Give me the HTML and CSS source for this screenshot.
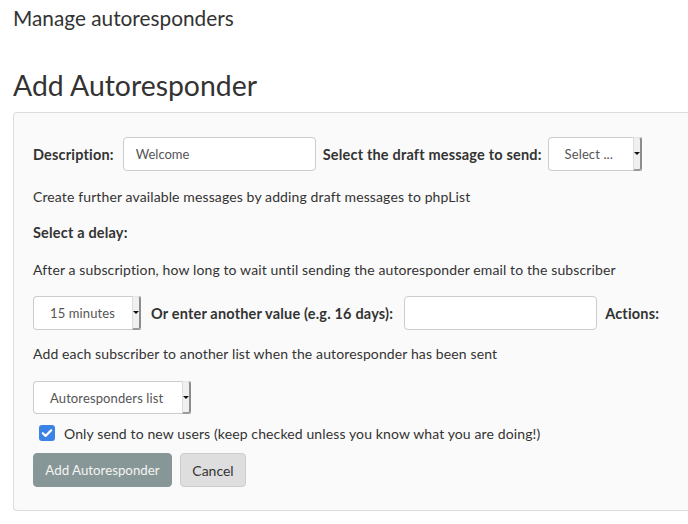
FILE: index.html
```html
<!DOCTYPE html>
<html>
<head>
<meta charset="utf-8">
<link rel="stylesheet" href="styles.css">
</head>
<body>
<div class="page">
  <h2 class="page-title">Manage autoresponders</h2>
  <h1 class="section-title">Add Autoresponder</h1>
  <form class="panel">
    <div class="row row-first">
      <label class="lbl">Description:</label>
      <input class="txt txt-desc" type="text" value="Welcome">
      <label class="lbl lbl-draft">Select the draft message to send:</label>
      <div class="sel sel-draft"><span class="sel-text">Select ...</span><span class="sel-btn"><span class="tri"></span></span></div>
    </div>
    <p class="line line-create">Create further available messages by adding draft messages to phpList</p>
    <p class="line line-bold">Select a delay:</p>
    <p class="line line-after">After a subscription, how long to wait until sending the autoresponder email to the subscriber</p>
    <div class="row row-delay">
      <div class="sel sel-delay"><span class="sel-text">15 minutes</span><span class="sel-btn"><span class="tri"></span></span></div>
      <label class="lbl lbl-other">Or enter another value (e.g. 16 days):</label>
      <input class="txt txt-other" type="text" value="">
      <label class="lbl">Actions:</label>
    </div>
    <p class="line line-add">Add each subscriber to another list when the autoresponder has been sent</p>
    <div class="row row-list">
      <div class="sel sel-list"><span class="sel-text">Autoresponders list</span><span class="sel-btn"><span class="tri"></span></span></div>
    </div>
    <div class="check-row">
      <span class="checkbox"><svg width="16" height="16" viewBox="0 0 16 16"><path d="M3.8 8.2 L6.6 10.9 L12.2 5.3" fill="none" stroke="#fff" stroke-width="2.2" stroke-linecap="round" stroke-linejoin="round"/></svg></span>
      <span class="check-text">Only send to new users (keep checked unless you know what you are doing!)</span>
    </div>
    <div class="buttons">
      <button type="button" class="btn btn-primary">Add Autoresponder</button>
      <button type="button" class="btn btn-cancel">Cancel</button>
    </div>
  </form>
</div>
</body>
</html>
```
FILE: styles.css
```css
html, body {
  margin: 0;
  padding: 0;
  background: #ffffff;
}
body {
  font-family: "Source Sans Pro", Lato, "Liberation Sans", sans-serif;
  color: #333333;
  font-size: 14px;
  letter-spacing: 0.12px;
}
.page {
  padding-left: 13px;
}
.page-title {
  margin: 4px 0 0;
  font-size: 20.8px;
  line-height: 28px;
  font-weight: 400;
  color: #333;
  letter-spacing: 0;
}
.section-title {
  margin: 35px 0 9px;
  font-size: 28.4px;
  line-height: 36px;
  font-weight: 400;
  color: #333;
  letter-spacing: 0;
}
.panel {
  display: flex;
  flex-direction: column;
  align-items: flex-start;
  width: 675px;
  box-sizing: border-box;
  border: 1px solid #dddddd;
  border-right: none;
  border-radius: 4px 0 0 4px;
  background: #fafafa;
  padding: 24px 0 23px 19px;
}
.row {
  display: flex;
  align-items: center;
  height: 34px;
}
.lbl {
  font-weight: 700;
  white-space: nowrap;
  font-size: 14.5px;
  letter-spacing: 0.18px;
}
.txt {
  box-sizing: border-box;
  height: 34px;
  border: 1px solid #cccccc;
  border-radius: 4px;
  background: #fff;
  font: inherit;
  color: #555;
  padding: 0 12px;
  outline: none;
}
.txt-desc {
  width: 193px;
  margin: 0 7px 0 9px;
  font-size: 13px;
}
.lbl-draft {
  margin-right: 6px;
}
.sel {
  box-sizing: border-box;
  height: 34px;
  display: flex;
  align-items: stretch;
  border: 1px solid #cccccc;
  border-right: none;
  border-radius: 4px 0 0 4px;
  background: #fff;
}
.sel-text {
  flex: 1;
  display: flex;
  align-items: center;
  padding-left: 16px;
  font-size: 13px;
  color: #555;
  white-space: nowrap;
}
.sel-btn {
  width: 9px;
  box-sizing: border-box;
  background: #f0f0f0;
  border-left: 1px solid #dddddd;
  border-right: 2px solid #8c8c8c;
  border-bottom: 2px solid #9a9a9a;
  border-top: 1px solid #e6e6e6;
  border-radius: 0 3px 3px 0;
  margin-top: -1px;
  margin-bottom: -1px;
  display: flex;
  align-items: center;
  justify-content: center;
}
.tri {
  width: 0;
  height: 0;
  border-left: 3px solid transparent;
  border-right: 3px solid transparent;
  border-top: 3px solid #111;
}
.sel-draft {
  width: 94px;
}
.sel-delay {
  width: 108px;
  margin-right: 10px;
}
.lbl-other {
  margin-right: 11px;
}
.txt-other {
  width: 193px;
  margin-right: 8px;
}
.sel-list {
  width: 158px;
}
.line {
  margin: 0;
  line-height: 20px;
}
.line-create { margin-top: 16px; }
.line-bold { margin-top: 16px; font-weight: 700; font-size: 14.5px; letter-spacing: 0.18px; }
.line-after { margin-top: 17px; }
.row-delay { margin-top: 16px; }
.line-add { margin-top: 14px; }
.row-list { margin-top: 17px; height: 33px; }
.row-list .sel { height: 33px; }
.check-row {
  margin-top: 9px;
  display: flex;
  align-items: center;
  height: 20px;
  padding-left: 6px;
}
.checkbox {
  width: 16px;
  height: 16px;
  border-radius: 3px;
  background: #3b82e6;
  display: inline-flex;
  margin-right: 9px;
}
.buttons {
  margin-top: 10px;
  display: flex;
  gap: 8px;
}
.btn {
  height: 34px;
  box-sizing: border-box;
  border-radius: 4px;
  font: inherit;
  font-size: 14px;
  padding: 0;
  white-space: nowrap;
}
.btn-primary {
  width: 139px;
  background: #879696;
  border: 1px solid #879696;
  color: #f4f4f4;
  font-size: 13.3px;
  letter-spacing: 0;
}
.btn-cancel {
  width: 66px;
  background: #dedede;
  border: 1px solid #cccccc;
  color: #333;
}
```
